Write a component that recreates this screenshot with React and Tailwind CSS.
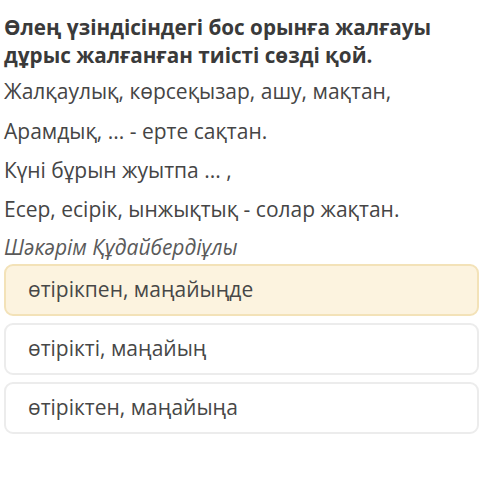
export default function App() {
  const lines = [
    "Жалқаулық, көрсеқызар, ашу, мақтан,",
    "Арамдық, ... - ерте сақтан.",
    "Күні бұрын жуытпа ... ,",
    "Есер, есірік, ынжықтық - солар жақтан.",
  ];
  const options = [
    { t: "өтірікпен, маңайыңде", sel: true },
    { t: "өтірікті, маңайың", sel: false },
    { t: "өтіріктен, маңайыңа", sel: false },
  ];
  return (
    <div className="w-[500px] h-[478px] bg-white pl-[4px] pr-[21px] pt-[13px] text-[#3f3f3f] font-['Open_Sans',sans-serif]">
      <div className="text-[20.7px] leading-[28px] font-bold text-[#3a3a3a]">
        Өлең үзіндісіндегі бос орынға жалғауы
        <br />
        дұрыс жалғанған тиісті сөзді қой.
      </div>
      <div className="mt-[3.4px] text-[21px] leading-[39.3px] text-[#454545]">
        {lines.map((l) => (
          <div key={l}>{l}</div>
        ))}
      </div>
      <div className="mt-[1.5px] text-[21px] leading-[32px] italic text-[#5a5a5a]">Шәкәрім Құдайбердіұлы</div>
      <div className="mt-[1px] flex flex-col gap-[7px]">
        {options.map((o) => (
          <div
            key={o.t}
            className={
              "h-[52px] flex items-center rounded-[9px] border-2 pl-[22px] text-[21px] text-[#474747] " +
              (o.sel ? "bg-[#fcf3df] border-[#f3e2b8]" : "bg-white border-[#ececec]")
            }
          >
            {o.t}
          </div>
        ))}
      </div>
    </div>
  );
}
